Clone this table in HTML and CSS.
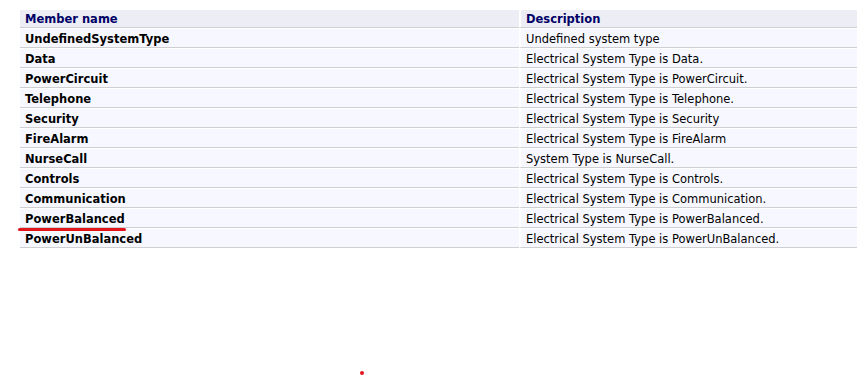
FILE: index.html
```html
<!DOCTYPE html>
<html>
<head>
<meta charset="utf-8">
<title>ElectricalSystemType Enumeration</title>
<link rel="stylesheet" href="styles.css">
</head>
<body>
<div class="page">
  <table class="members">
    <thead>
      <tr><th class="col-name">Member name</th><th class="col-desc">Description</th></tr>
    </thead>
    <tbody>
      <tr><td class="name">UndefinedSystemType</td><td class="desc">Undefined system type</td></tr>
      <tr><td class="name">Data</td><td class="desc">Electrical System Type is Data.</td></tr>
      <tr><td class="name">PowerCircuit</td><td class="desc">Electrical System Type is PowerCircuit.</td></tr>
      <tr><td class="name">Telephone</td><td class="desc">Electrical System Type is Telephone.</td></tr>
      <tr><td class="name">Security</td><td class="desc">Electrical System Type is Security</td></tr>
      <tr><td class="name">FireAlarm</td><td class="desc">Electrical System Type is FireAlarm</td></tr>
      <tr><td class="name">NurseCall</td><td class="desc">System Type is NurseCall.</td></tr>
      <tr><td class="name">Controls</td><td class="desc">Electrical System Type is Controls.</td></tr>
      <tr><td class="name">Communication</td><td class="desc">Electrical System Type is Communication.</td></tr>
      <tr><td class="name"><span class="marked">PowerBalanced</span></td><td class="desc">Electrical System Type is PowerBalanced.</td></tr>
      <tr><td class="name">PowerUnBalanced</td><td class="desc">Electrical System Type is PowerUnBalanced.</td></tr>
    </tbody>
  </table>
  <div class="dot-row"><span class="dot"></span></div>
</div>
</body>
</html>
```

FILE: styles.css
```css
html, body {
  margin: 0;
  padding: 0;
  background: #ffffff;
}

.page {
  padding: 9px 0 0 20px;
}

.members {
  border-collapse: separate;
  border-spacing: 0 1px;
  width: 100%;
  table-layout: fixed;
  font-family: "DejaVu Sans", Verdana, sans-serif;
  font-size: 11.5px;
  line-height: 16px;
}

.members th,
.members td {
  padding: 1px 0 0 5px;
  text-align: left;
  vertical-align: middle;
  border-bottom: 1px solid #cfcfd2;
  white-space: nowrap;
}

.members th {
  height: 16px;
  background: #ededf5;
  color: #000066;
  font-weight: bold;
}

.members td {
  height: 17px;
  background: #f7f7ff;
  color: #000000;
}

.col-name {
  width: 494px;
}

/* white gutter between the two columns */
.col-desc,
.members td.desc {
  border-left: 2px solid #ffffff;
  padding-left: 5px;
  background-clip: padding-box;
}

.members td.name {
  font-weight: bold;
}

.marked {
  position: relative;
}

/* red pen stroke beneath the highlighted member */
.marked::after {
  content: "";
  position: absolute;
  left: -7px;
  right: -1px;
  bottom: -5px;
  height: 3px;
  border-radius: 2px;
  background: #e3161b;
}

.dot-row {
  padding: 122px 0 0 340px;
}

.dot {
  display: block;
  width: 4px;
  height: 4px;
  border-radius: 50%;
  background: #e3161b;
}
```
